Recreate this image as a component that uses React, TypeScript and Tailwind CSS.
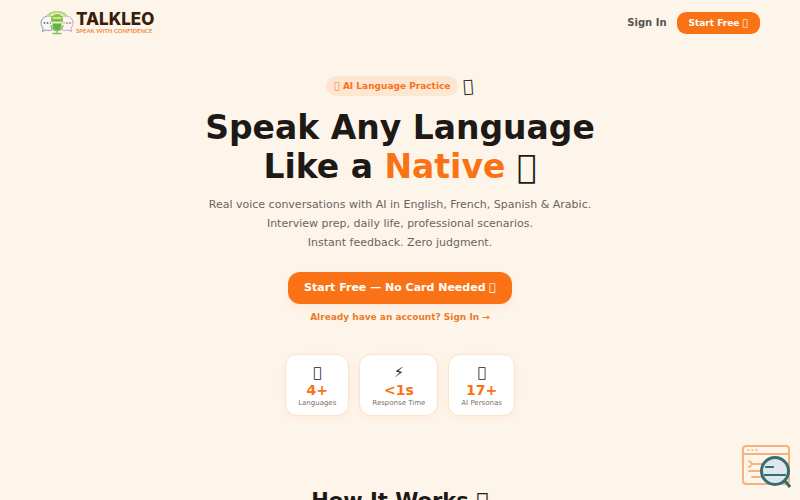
// Private-use character: draws the font's own empty box
const BOX = '\u{F0000}';

const stats = [
  { icon: BOX, value: '4+', label: 'Languages' },
  { icon: '⚡', value: '<1s', label: 'Response Time' },
  { icon: BOX, value: '17+', label: 'AI Personas' },
];

function LogoMark() {
  return (
    <svg viewBox="0 0 34 24" className="h-6 w-[34px]" fill="none" aria-hidden="true">
      <path d="M12 5.5C7 3.5 1 6.500 1 12c0 2 .8 3.700 2 5l-.5 3.500 3.500-1.500c2 .8 4.500.6 6.500-.5" stroke="#7d9bd0" strokeWidth="1" />
      <path d="M22 5.500c5-2 11 1 11 6.500 0 2-.8 3.700-2 5l.5 3.500-3.500-1.500c-2 .8-4.500.6-6.500-.5" stroke="#c5a3d0" strokeWidth="1" />
      <path d="M7.500 5C12-.5 22-.5 26.500 5" stroke="#b9dc8c" strokeWidth="2.500" />
      <path d="M11 9C11 5 13.500 3 17 3s6 2 6 6v2H11z" fill="#8cc63f" />
      <path d="M13 7h8" stroke="#d8efb4" strokeWidth="1.500" />
      <rect x="12.500" y="9" width="9" height="10" rx="4" fill="#62b246" />
      <path d="M13 11.500h8" stroke="#e5f4c9" strokeWidth="2" />
      <path d="M11 14c0 7.500 12 7.500 12 0M17 19v3M12.500 22.500h9" stroke="#7fbf63" strokeWidth="1.300" />
      <g fill="#5578a8">
        <circle cx="4.500" cy="12" r=".9" />
        <circle cx="7.500" cy="12" r=".9" />
        <circle cx="10.200" cy="12" r=".7" />
      </g>
      <g fill="#9a78b8">
        <circle cx="24" cy="12" r=".7" />
        <circle cx="27" cy="12" r=".9" />
        <circle cx="30" cy="12" r=".9" />
      </g>
    </svg>
  );
}

function InspectIcon() {
  return (
    <svg viewBox="0 0 50 46" className="h-[46px] w-[50px]" fill="none" aria-hidden="true">
      <g stroke="#f8b17c" strokeWidth="2" strokeLinecap="round">
        <rect x="2" y="2" width="46" height="38" rx="3" />
        <path d="M2 10h46M8 17l4 3-4 3M14 20h8M8 27h12M11 33h9" />
        <path d="M7 6h1M11 6h1M15 6h1" strokeWidth="1.500" />
      </g>
      <circle cx="34" cy="27" r="13.500" fill="#dde7ed" stroke="#356e70" strokeWidth="3" />
      <path d="M25 23h7M24 31h20" stroke="#356e70" strokeWidth="2.200" strokeLinecap="round" />
      <path d="M44 37l5 6" stroke="#356e70" strokeWidth="3" />
    </svg>
  );
}

function Header() {
  return (
    <header className="flex items-center justify-between px-10 pt-[11px]">
      <a href="#" className="flex items-center gap-[2px]">
        <LogoMark />
        <span className="flex flex-col">
          <span className="font-['Inter',sans-serif] text-[17px] leading-4 font-extrabold text-[#3b1d0c]">TALKLEO</span>
          <span className="font-['Lato',sans-serif] text-[6px] leading-2 font-bold text-[#f28a3c]">
            SPEAK WITH CONFIDENCE
          </span>
        </span>
      </a>
      <nav className="flex items-center gap-[10px]">
        <a href="#signin" className="text-[10px] leading-4 font-semibold text-[#57534e]">
          Sign In
        </a>
        <button className="rounded-[9px] bg-[#f97316] px-3 py-[5px] text-[9px] leading-3 font-bold text-white">
          Start Free {BOX}
        </button>
      </nav>
    </header>
  );
}

function Hero() {
  return (
    <section className="flex flex-col items-center px-6 pt-[41px] text-center">
      <div className="flex items-center gap-[5px]">
        <span className="rounded-full bg-[#fde6d2] px-2 py-1 text-[9px] leading-3 font-bold text-[#f97316]">
          {BOX} AI Language Practice
        </span>
        <span className="rotate-[-4deg] text-[17px] leading-5 text-[#1c1917]">{BOX}</span>
      </div>

      <h1 className="mt-3 text-[33px] leading-[39px] font-black text-[#1c1917]">
        Speak Any Language
        <br />
        Like a <span className="text-[#f97316]">Native</span> {BOX}
      </h1>

      <p className="mt-[9px] text-[11px] leading-[19px] text-[#6b645e]">
        Real voice conversations with AI in English, French, Spanish &amp; Arabic.
        <br />
        Interview prep, daily life, professional scenarios.
        <br />
        Instant feedback. Zero judgment.
      </p>

      <button className="mt-5 rounded-xl bg-[#f97316] px-4 py-2 text-[11px] leading-4 font-bold text-white shadow-[0_4px_12px_rgba(249,115,22,0.08)]">
        Start Free — No Card Needed {BOX}
      </button>
      <a href="#signin" className="mt-[7px] text-[9px] leading-3 font-semibold text-[#ea7a2a]">
        Already have an account? Sign In →
      </a>

      <div className="mt-[31px] flex gap-[10px]">
        {stats.map((stat) => (
          <div
            key={stat.label}
            className="flex flex-col items-center rounded-xl border border-[#fbe3cd] bg-white px-3 py-2 shadow-[0_2px_8px_rgba(249,115,22,0.08)]"
          >
            <span className="text-[14px] leading-[18px] text-[#1c1917]">{stat.icon}</span>
            <span className="text-[14px] leading-[18px] font-black text-[#f97316]">{stat.value}</span>
            <span className="text-[7px] leading-2 text-[#78716c]">{stat.label}</span>
          </div>
        ))}
      </div>
    </section>
  );
}

export default function App() {
  return (
    <div className="min-h-screen bg-[#fef5ea] font-['DejaVu_Sans',sans-serif]">
      <Header />
      <main>
        <Hero />
        <section className="px-6 pt-[71px] pb-16 text-center">
          <h2 className="text-[21px] leading-7 font-black text-[#1c1917]">How It Works {BOX}</h2>
        </section>
      </main>
      <button aria-label="Inspect page" className="fixed right-[9px] bottom-[10px]">
        <InspectIcon />
      </button>
    </div>
  );
}
